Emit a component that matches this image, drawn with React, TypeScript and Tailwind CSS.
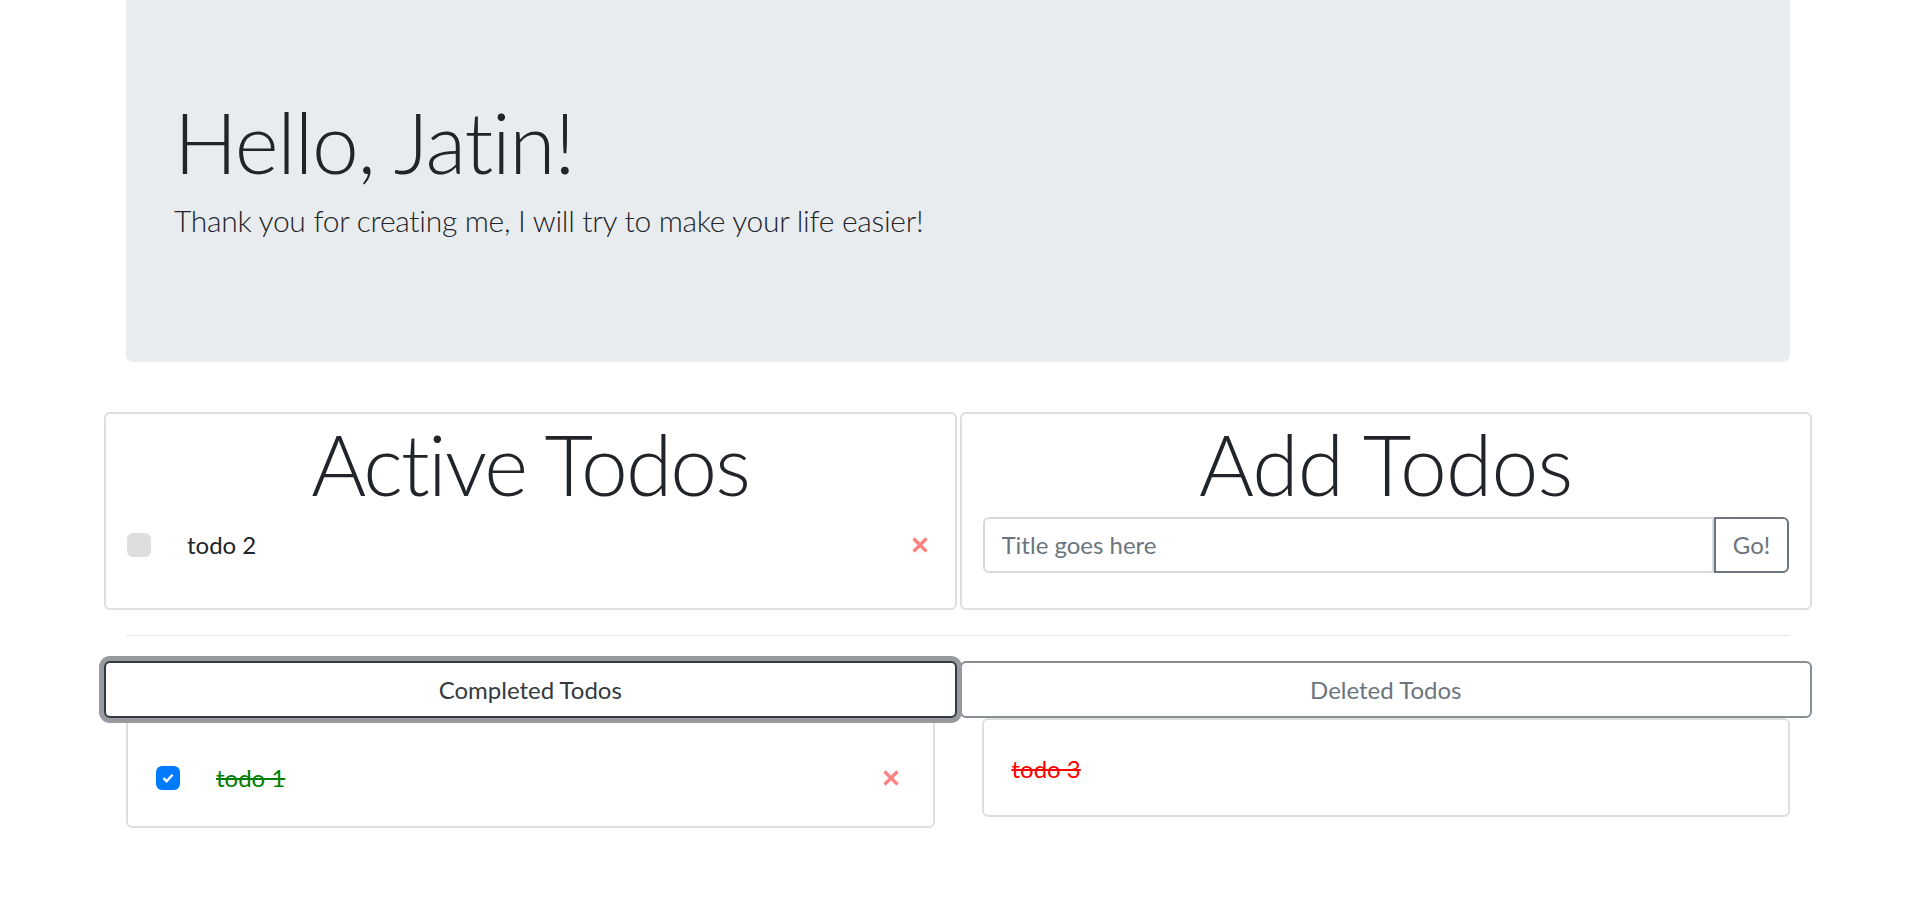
import React from 'react';

function CloseX() {
  return (
    <svg width="18" height="16" viewBox="0 0 18 16" className="shrink-0">
      <path d="M2.5 1.5 L15.5 14.5 M15.5 1.5 L2.5 14.5" stroke="#ff8080" strokeWidth="3.2" strokeLinecap="butt" />
    </svg>
  );
}

function CheckBox({ checked }: { checked?: boolean }) {
  if (checked) {
    return (
      <div className="flex h-6 w-6 shrink-0 items-center justify-center rounded-[6px] bg-[#007bff]">
        <svg width="12" height="10" viewBox="0 0 12 10">
          <path d="M1.5 5.2 L4.6 8.2 L10.5 1.8" stroke="white" strokeWidth="2.4" fill="none" />
        </svg>
      </div>
    );
  }
  return <div className="h-6 w-6 shrink-0 rounded-[6px] bg-[#dedede]" />;
}

export default function App() {
  return (
    <div className="min-h-screen bg-white font-['Lato','Noto_Sans',sans-serif] text-[#212529] [font-variant-ligatures:none]">
      <div className="ml-[104px] w-[1708px]">
        {/* jumbotron */}
        <div className="px-[22px]">
          <div className="h-[362px] rounded-b-[7px] bg-[#e9ecef] pl-[48px] pt-[92px]">
            <h1 className="text-[84px] font-light leading-[1.2] tracking-[-0.015em]">Hello, Jatin!</h1>
            <p className="mt-[5px] text-[30px] font-light leading-[1.5] tracking-[-0.3px]">
              Thank you for creating me, I will try to make your life easier!
            </p>
          </div>
        </div>

        {/* active / add */}
        <div className="mt-[50px] grid grid-cols-2 gap-[3px]">
          <div className="h-[198px] rounded-[6px] border-2 border-[#dfdfdf]">
            <h2 className="text-center text-[84px] font-light leading-[1.2] tracking-[-0.022em]">Active Todos</h2>
            <div className="mt-[12px] flex items-center pl-[21px] pr-[26px]">
              <CheckBox />
              <span className="ml-[36px] text-[24px] leading-[1.5]">todo 2</span>
              <div className="ml-auto">
                <CloseX />
              </div>
            </div>
          </div>
          <div className="h-[198px] rounded-[6px] border-2 border-[#dfdfdf] px-[21px]">
            <h2 className="text-center text-[84px] font-light leading-[1.2] tracking-[-0.01em]">Add Todos</h2>
            <div className="mt-[2px] flex h-[56px]">
              <input
                placeholder="Title goes here"
                className="min-w-0 flex-1 rounded-l-[6px] border-2 border-[#d6d9dc] px-[17px] text-[24px] outline-none placeholder:text-[#6c757d]"
              />
              <button className="w-[75px] rounded-r-[6px] border-2 border-[#6c757d] text-[24px] text-[#6c757d]">
                Go!
              </button>
            </div>
          </div>
        </div>

        <div className="px-[22px] pt-[25px]">
          <hr className="border-t border-[#e6e6e6]" />
        </div>

        {/* tabs */}
        <div className="mt-[25px] grid grid-cols-2 gap-[3px]">
          <button className="relative z-10 h-[57px] rounded-[6px] border-2 border-[#343a40] bg-white text-[24px] text-[#343a40] shadow-[0_0_0_5px_#979a9e]">
            Completed Todos
          </button>
          <button className="h-[57px] rounded-[6px] border-2 border-[#868e96] bg-white text-[24px] text-[#6c757d]">
            Deleted Todos
          </button>
        </div>

        <div className="grid grid-cols-2 items-start gap-[3px]">
          <div className="px-[22px]">
            <div className="rounded-[6px] border-2 border-[#dfdfdf] px-[28px] pb-[30px] pt-[40px]">
              <div className="flex h-9 items-center">
                <CheckBox checked />
                <span className="ml-[36px] text-[24px] leading-[1.5] text-[#008000] line-through">todo 1</span>
                <div className="ml-auto mr-[5px]">
                  <CloseX />
                </div>
              </div>
            </div>
          </div>
          <div className="px-[22px]">
            <div className="rounded-[6px] border-2 border-[#dfdfdf] px-[28px] pb-[28px] pt-[31px]">
              <div className="flex h-9 items-center">
                <span className="text-[24px] leading-[1.5] text-[#ff0000] line-through">todo 3</span>
              </div>
            </div>
          </div>
        </div>
      </div>
    </div>
  );
}
